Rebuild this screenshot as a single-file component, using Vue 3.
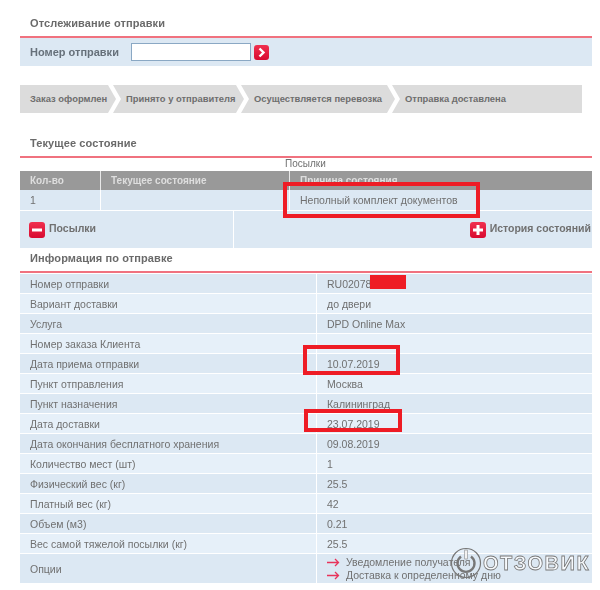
<template>
  <div class="page">
    <h2 class="title first">Отслеживание отправки</h2>
    <div class="search">
      <label class="search-label">Номер отправки</label>
      <input class="search-input" type="text" />
      <button class="go" type="button">
        <svg width="15" height="15" viewBox="0 0 15 15"><path d="M5.500 3.500 9.500 7.500 5.500 11.500" fill="none" stroke="#fff" stroke-width="2.400" /></svg>
      </button>
    </div>

    <div class="steps">
      <div v-for="step in steps" :key="step" class="step">{{ step }}</div>
    </div>

    <h2 class="title second">Текущее состояние</h2>
    <div class="parcels-caption">Посылки</div>
    <table class="state-table">
      <thead>
        <tr>
          <th class="c-qty">Кол-во</th>
          <th class="c-state">Текущее состояние</th>
          <th>Причина состояния</th>
        </tr>
      </thead>
      <tbody>
        <tr>
          <td>1</td>
          <td></td>
          <td>Неполный комплект документов</td>
        </tr>
      </tbody>
    </table>
    <div class="toggles">
      <div class="toggle left">
        <span class="icon-btn">
          <svg width="16" height="16" viewBox="0 0 16 16"><rect x="3" y="6.500" width="10" height="3" fill="#fff" /></svg>
        </span>
        Посылки
      </div>
      <div class="toggle right">
        <span class="icon-btn">
          <svg width="16" height="16" viewBox="0 0 16 16"><path d="M6.500 3h3v3.500H13v3H9.500V13h-3V9.500H3v-3h3.500z" fill="#fff" /></svg>
        </span>
        История состояний
      </div>
    </div>

    <h2 class="title third">Информация по отправке</h2>
    <table class="info-table">
      <tbody>
        <tr v-for="row in info" :key="row[0]">
          <td class="info-name">{{ row[0] }}</td>
          <td class="info-value">{{ row[1] }}</td>
        </tr>
        <tr class="options">
          <td class="info-name">Опции</td>
          <td class="info-value">
            <div v-for="opt in options" :key="opt" class="option">
              <svg width="13" height="9" viewBox="0 0 13 9"><path d="M0 4.500H11.500M8 1 11.500 4.500 8 8" fill="none" stroke="#e8335a" stroke-width="1.300" /></svg>
              {{ opt }}
            </div>
          </td>
        </tr>
      </tbody>
    </table>

    <!-- red marks drawn over the screenshot -->
    <div class="mark mark-reason"></div>
    <div class="mark mark-accept"></div>
    <div class="mark mark-delivery"></div>
    <div class="redact"></div>

    <div class="watermark">
      <svg width="32" height="32" viewBox="0 0 32 32">
        <circle cx="16" cy="16" r="14.500" fill="none" stroke="#777" stroke-width="1.200" />
        <path d="M11 9.500a8.500 8.500 0 1 0 10 0" fill="none" stroke="#777" stroke-width="2.400" />
        <rect x="14.800" y="3" width="2.400" height="9" fill="#fff" stroke="#777" stroke-width=".6" />
      </svg>
      <span class="wm-text">ОТЗОВИК</span>
    </div>
  </div>
</template>

<script setup>
const steps = ['Заказ оформлен', 'Принято у отправителя', 'Осуществляется перевозка', 'Отправка доставлена']

const info = [
  ['Номер отправки', 'RU02078'],
  ['Вариант доставки', 'до двери'],
  ['Услуга', 'DPD Online Max'],
  ['Номер заказа Клиента', ''],
  ['Дата приема отправки', '10.07.2019'],
  ['Пункт отправления', 'Москва'],
  ['Пункт назначения', 'Калининград'],
  ['Дата доставки', '23.07.2019'],
  ['Дата окончания бесплатного хранения', '09.08.2019'],
  ['Количество мест (шт)', '1'],
  ['Физический вес (кг)', '25.5'],
  ['Платный вес (кг)', '42'],
  ['Объем (м3)', '0.21'],
  ['Вес самой тяжелой посылки (кг)', '25.5']
]

const options = ['Уведомление получателя', 'Доставка к определенному дню']
</script>

<style>
html, body {
  margin: 0;
  background: #fff;
}
</style>

<style scoped>
.page {
  position: relative;
  box-sizing: border-box;
  width: 600px;
  height: 590px;
  padding: 0 8px 0 20px;
  overflow: hidden;
  font-family: "Liberation Sans", Arial, sans-serif;
  font-size: 10.5px;
  color: #707070;
  filter: blur(0.5px);
}

.title {
  margin: 0;
  height: 15px;
  padding: 0 0 5px 10px;
  font-size: 11px;
  line-height: 15px;
  letter-spacing: 0.1px;
  font-weight: bold;
  color: #6a6a6a;
  border-bottom: 2px solid #f0727f;
}
.title.first { margin-top: 16px; }
.title.second { margin-top: 23px; }
.title.third { margin-top: 3px; }

.search {
  display: flex;
  align-items: center;
  height: 28px;
  padding-left: 10px;
  background: #dce8f3;
}
.search-label {
  width: 101px;
  font-size: 11px;
  font-weight: bold;
  color: #66707a;
}
.search-input {
  box-sizing: border-box;
  width: 120px;
  height: 18px;
  padding: 0;
  border: 1px solid #8aa8c4;
  background: #fff;
}
.go {
  display: flex;
  width: 15px;
  height: 15px;
  margin-left: 3px;
  padding: 0;
  border: 0;
  border-radius: 3px;
  background: linear-gradient(#f0304f, #d80a30);
}

.steps {
  display: flex;
  width: 562px;
  margin-top: 19px;
}
.step {
  box-sizing: border-box;
  height: 28px;
  margin-left: -3px;
  padding-left: 13px;
  font-size: 9.4px;
  font-weight: bold;
  line-height: 28px;
  white-space: nowrap;
  color: #6e6e6e;
  background: #dcdcdc;
  clip-path: polygon(0 0, calc(100% - 8px) 0, 100% 50%, calc(100% - 8px) 100%, 0 100%, 8px 50%);
}
.step:nth-child(1) {
  width: 96px;
  margin-left: 0;
  padding-left: 10px;
  clip-path: polygon(0 0, calc(100% - 8px) 0, 100% 50%, calc(100% - 8px) 100%, 0 100%);
}
.step:nth-child(2) { width: 131px; }
.step:nth-child(3) { width: 154px; }
.step:nth-child(4) {
  width: 190px;
  clip-path: polygon(0 0, 100% 0, 100% 100%, 0 100%, 8px 50%);
}

.parcels-caption {
  height: 13px;
  padding-left: 265px;
  font-size: 10px;
  line-height: 11px;
}

.state-table {
  width: 572px;
  table-layout: fixed;
  border-collapse: collapse;
}
.state-table th {
  height: 19px;
  padding: 0 0 0 10px;
  font-size: 10px;
  font-weight: bold;
  text-align: left;
  color: #dedede;
  background: #999;
  border-left: 1px solid #e8e8e8;
}
.state-table th:first-child,
.state-table td:first-child {
  border-left: 0;
}
.c-qty { width: 70px; }
.c-state { width: 178px; }
.state-table td {
  height: 20px;
  padding: 0 0 0 10px;
  background: #dce8f3;
  border-left: 1px solid #fff;
  border-bottom: 1px solid #fff;
}

.toggles {
  display: flex;
  height: 37px;
  background: #dce8f3;
}
.toggle {
  display: flex;
  align-items: flex-start;
  gap: 4px;
  padding-top: 11px;
  font-size: 10.5px;
  font-weight: bold;
  line-height: 13px;
  white-space: nowrap;
  box-sizing: border-box;
}
.toggle.left {
  width: 214px;
  padding-left: 9px;
  border-right: 1px solid #fff;
}
.toggle.right {
  flex: 1;
  justify-content: flex-end;
  padding-right: 1px;
}
.icon-btn {
  display: block;
  width: 16px;
  height: 16px;
  border-radius: 3px;
  background: linear-gradient(#f0304f, #d80a30);
}

.info-table {
  width: 572px;
  margin-top: 1px;
  table-layout: fixed;
  border-collapse: collapse;
}
.info-table td {
  height: 19px;
  padding: 0 0 0 10px;
  border-bottom: 1px solid #fff;
  line-height: 14px;
}
.info-table tr:nth-child(odd) td { background: #dce8f3; }
.info-table tr:nth-child(even) td { background: #e6f0f9; }
.info-name { width: 286px; }
.info-value { border-left: 1px solid #fff; }
.options td { height: 29px; }
.option {
  display: flex;
  align-items: center;
  gap: 6px;
  height: 13px;
  line-height: 13px;
  white-space: nowrap;
}

.mark {
  position: absolute;
  box-sizing: border-box;
  border: 4px solid #ee1c25;
}
.mark-reason { left: 283px; top: 182px; width: 197px; height: 36px; }
.mark-accept { left: 303px; top: 345px; width: 97px; height: 30px; }
.mark-delivery { left: 304px; top: 409px; width: 98px; height: 23px; }
.redact {
  position: absolute;
  left: 370px;
  top: 275px;
  width: 36px;
  height: 14px;
  background: #ee1c25;
}

.watermark {
  position: absolute;
  left: 450px;
  top: 547px;
  display: flex;
  align-items: center;
  gap: 1px;
}
.wm-text {
  font-size: 20px;
  font-weight: bold;
  letter-spacing: 1.5px;
  color: rgba(255, 255, 255, 0.75);
  -webkit-text-stroke: 0.8px #777;
}
</style>
